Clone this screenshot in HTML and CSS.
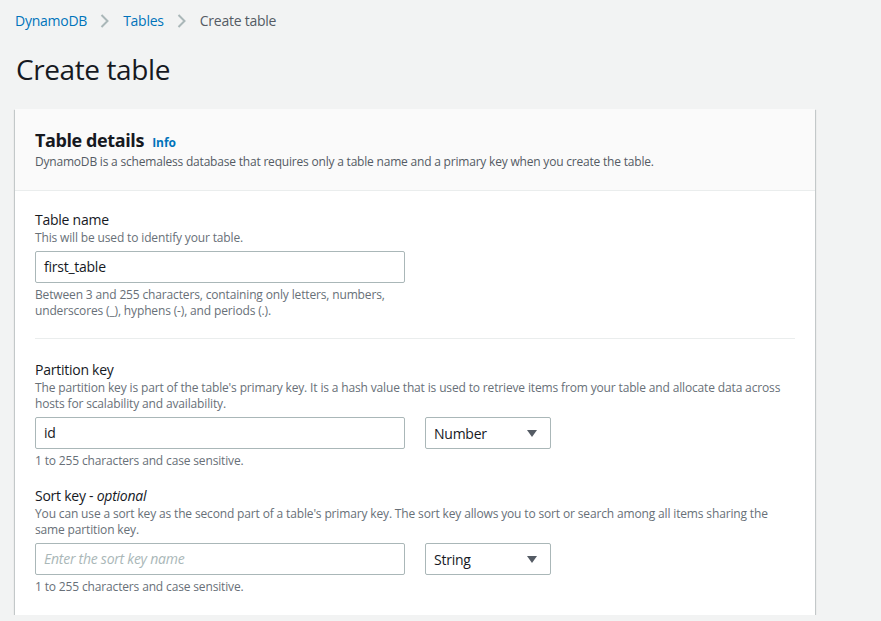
FILE: index.html
```html
<!DOCTYPE html>
<html lang="en">
<head>
<meta charset="utf-8">
<title>Create table</title>
<link rel="stylesheet" href="styles.css">
</head>
<body>
<div class="page">
  <nav class="crumbs">
    <a class="crumb-link" href="#">DynamoDB</a>
    <svg class="chev" width="10" height="14" viewBox="0 0 10 14"><path d="M1.5 1 L7.5 7 L1.5 13" fill="none" stroke="#aab7b8" stroke-width="2"/></svg>
    <a class="crumb-link" href="#">Tables</a>
    <svg class="chev" width="10" height="14" viewBox="0 0 10 14"><path d="M1.5 1 L7.5 7 L1.5 13" fill="none" stroke="#aab7b8" stroke-width="2"/></svg>
    <span class="crumb-current">Create table</span>
  </nav>
  <h1 class="title">Create table</h1>
  <section class="card">
    <header class="card-head">
      <h2 class="card-title">Table details <a class="info" href="#">Info</a></h2>
      <p class="card-desc">DynamoDB is a schemaless database that requires only a table name and a primary key when you create the table.</p>
    </header>
    <div class="card-body">
      <div class="field">
        <div class="label">Table name</div>
        <div class="desc">This will be used to identify your table.</div>
        <div class="input">first_table</div>
        <div class="hint">Between 3 and 255 characters, containing only letters, numbers,<br>underscores (_), hyphens (-), and periods (.).</div>
      </div>
      <hr class="divider">
      <div class="field">
        <div class="label">Partition key</div>
        <div class="desc">The partition key is part of the table's primary key. It is a hash value that is used to retrieve items from your table and allocate data across hosts for scalability and availability.</div>
        <div class="row">
          <div class="input">id</div>
          <div class="select"><span>Number</span><svg width="10" height="7" viewBox="0 0 10 7"><path d="M0 0 H10 L5 7 Z" fill="#545b64"/></svg></div>
        </div>
        <div class="hint">1 to 255 characters and case sensitive.</div>
      </div>
      <div class="field field-sort">
        <div class="label">Sort key - <i>optional</i></div>
        <div class="desc">You can use a sort key as the second part of a table's primary key. The sort key allows you to sort or search among all items sharing the same partition key.</div>
        <div class="row">
          <div class="input placeholder">Enter the sort key name</div>
          <div class="select"><span>String</span><svg width="10" height="7" viewBox="0 0 10 7"><path d="M0 0 H10 L5 7 Z" fill="#545b64"/></svg></div>
        </div>
        <div class="hint">1 to 255 characters and case sensitive.</div>
      </div>
    </div>
  </section>
</div>
</body>
</html>
```

FILE: styles.css
```css
* { box-sizing: border-box; }
html, body { margin: 0; padding: 0; }
body {
  background: #f2f3f3;
  font-family: "Open Sans", "Noto Sans", sans-serif;
  color: #16191f;
}
.page { padding: 11px 15px 0 15px; width: 881px; }
.crumbs {
  display: flex;
  align-items: center;
  font-size: 14px;
  line-height: 20px;
  height: 20px;
  letter-spacing: -0.25px;
}
.crumb-link { color: #0073bb; text-decoration: none; }
.chev { margin: 0 13px 0 13px; }
.crumb-current { color: #545b64; }
.title {
  margin: 20px 0 0 1px;
  font-size: 28px;
  line-height: 36px;
  height: 36px;
  font-weight: 400;
  letter-spacing: -0.4px;
}
.card {
  margin-top: 22px;
  width: 800px;
  background: #fff;
  box-shadow: 0 1px 1px 0 rgba(0,28,36,.3), 1px 1px 1px 0 rgba(0,28,36,.15), -1px 1px 1px 0 rgba(0,28,36,.15);
}
.card-head {
  background: #fafafa;
  padding: 20px 20px 20px 20px;
  border-bottom: 1px solid #eaeded;
}
.card-title {
  margin: 0;
  font-size: 18px;
  line-height: 22px;
  height: 22px;
  font-weight: 700;
  letter-spacing: -0.4px;
}
.info {
  color: #0073bb;
  font-size: 12px;
  line-height: 12px;
  font-weight: 700;
  text-decoration: none;
  margin-left: 4px;
  letter-spacing: -0.1px;
}
.card-desc {
  margin: 3px 0 0 0;
  font-size: 12px;
  line-height: 16px;
  color: #545b64;
  letter-spacing: -0.2px;
}
.card-body { padding: 18px 20px 20px 20px; }
.label { font-size: 14px; line-height: 21px; height: 21px; letter-spacing: -0.25px; }
.desc { font-size: 12px; line-height: 16px; color: #687078; letter-spacing: -0.15px; }
.input {
  margin-top: 5px;
  width: 370px;
  height: 32px;
  border: 1px solid #aab7b8;
  border-radius: 2px;
  background: #fff;
  padding: 0 8px;
  font-size: 14px;
  line-height: 30px;
  letter-spacing: -0.25px;
}
.placeholder { color: #aab7b8; font-style: italic; }
.hint { margin-top: 4px; font-size: 12px; line-height: 16px; color: #687078; letter-spacing: -0.15px; }
.divider { margin: 19px 0 20px 0; border: 0; border-top: 1px solid #eaeded; }
.row { display: flex; gap: 20px; margin-top: 5px; }
.row .input { margin-top: 0; }
.select {
  width: 126px;
  height: 32px;
  border: 1px solid #aab7b8;
  border-radius: 2px;
  padding: 0 13px 0 8px;
  display: flex;
  align-items: center;
  justify-content: space-between;
  font-size: 14px;
  letter-spacing: -0.25px;
}
.field-sort { margin-top: 16px; }
```
